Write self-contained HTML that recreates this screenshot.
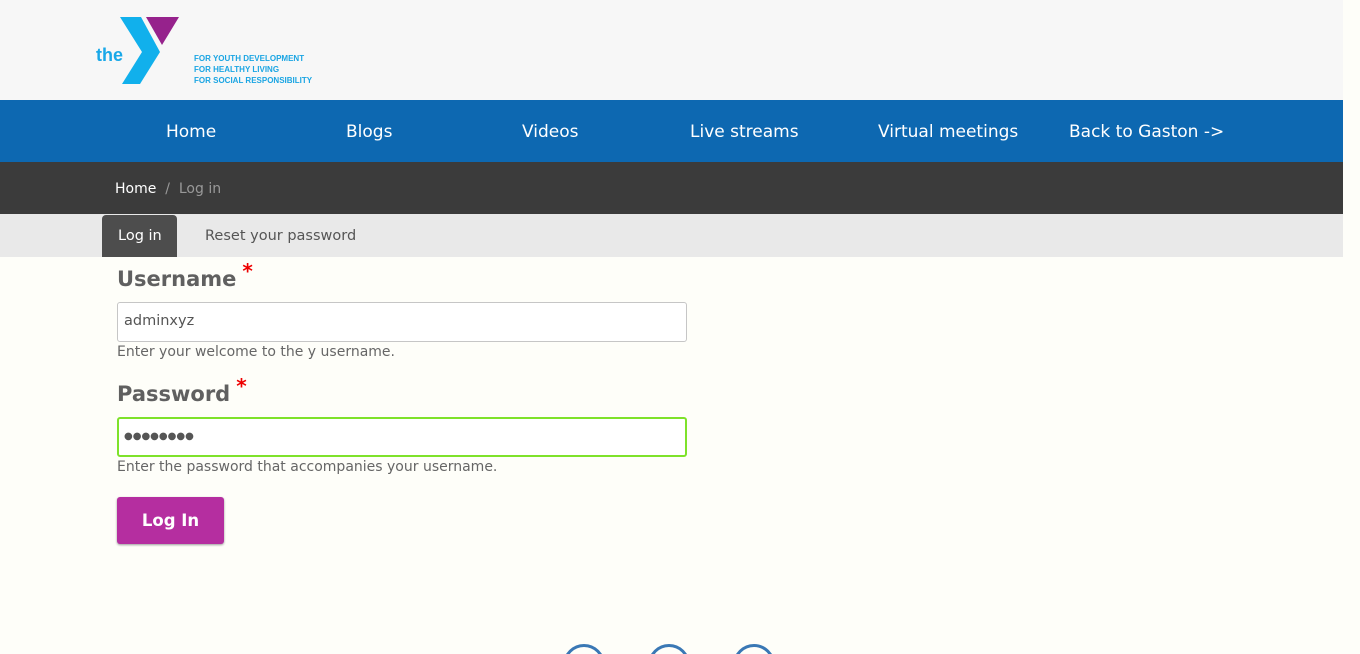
<!DOCTYPE html>
<html style="overflow:hidden;height:654px"><head><meta charset="utf-8"><style>
*{margin:0;padding:0;box-sizing:border-box}
html,body{width:1360px;height:654px;overflow:hidden}
body{background:#fefef9;font-family:"DejaVu Sans","Liberation Sans",sans-serif;position:relative}
.a{position:absolute}
#hdr{left:0;top:0;width:1343px;height:100px;background:#f7f7f7}
#nav{left:0;top:100px;width:1343px;height:62px;background:#0d68b1}
#nav span{position:absolute;top:22px;color:#fff;font-size:17px;white-space:nowrap}
#bc{left:0;top:162px;width:1343px;height:52px;background:#3b3b3b;font-size:14px;color:#999}
#tabs{left:0;top:214px;width:1343px;height:43px;background:#e9e9e9}
.lbl{font-weight:bold;font-size:21px;color:#606060}
.lbl i{color:#e00;font-style:normal;font-size:20px;position:relative;top:-8px;margin-left:6px}
.inp{width:570px;height:40px;background:#fff;border:1px solid #c6c6c6;border-radius:3px;font-size:14.5px;color:#555;padding:10px 6px}
.desc{font-size:14px;color:#666}
</style></head><body>
<div class="a" id="hdr">
<span class="a" style="left:96px;top:45px;color:#19a8e8;font-weight:bold;font-size:18px;font-family:'Liberation Sans',sans-serif">the</span>
<svg class="a" style="left:118px;top:14px" width="70" height="74"><polygon points="2,3 23,3 42,38 22,70 4,70 24,38" fill="#11b0ec"/><polygon points="28,3 61,3 44,31" fill="#96228c"/></svg>
<div class="a" style="left:194px;top:53px;color:#1aa5e3;font-size:8px;font-weight:bold;line-height:11px;font-family:'Liberation Sans',sans-serif">FOR YOUTH DEVELOPMENT<br>FOR HEALTHY LIVING<br>FOR SOCIAL RESPONSIBILITY</div>
</div>
<div class="a" id="nav">
<span style="left:166px">Home</span><span style="left:346px">Blogs</span><span style="left:522px">Videos</span><span style="left:690px">Live streams</span><span style="left:878px">Virtual meetings</span><span style="left:1069px">Back to Gaston -&gt;</span>
</div>
<div class="a" id="bc"><span class="a" style="left:115px;top:19px"><span style="color:#fff">Home</span> &nbsp;/&nbsp; Log in</span></div>
<div class="a" id="tabs">
<div class="a" style="left:102px;top:1px;width:75px;height:42px;background:#4d4d4d;border-radius:4px 4px 0 0;color:#fff;font-size:14.5px;padding:13px 0 0 16px">Log in</div>
<span class="a" style="left:205px;top:14px;font-size:14.5px;color:#555">Reset your password</span>
</div>
<div class="a lbl" style="left:117px;top:267px">Username<i>*</i></div>
<div class="a inp" style="left:117px;top:302px">adminxyz</div>
<div class="a desc" style="left:117px;top:344px">Enter your welcome to the y username.</div>
<div class="a lbl" style="left:117px;top:382px">Password<i>*</i></div>
<div class="a inp" style="left:117px;top:417px;border:2px solid #7ee22a;font-size:10px;letter-spacing:0px;padding:12px 5px;color:#555">●●●●●●●●</div>
<div class="a desc" style="left:117px;top:459px">Enter the password that accompanies your username.</div>
<div class="a" style="left:117px;top:497px;width:107px;height:47px;background:#b52ea0;border-radius:3px;color:#fff;font-weight:bold;font-size:16.5px;text-align:center;line-height:47px;font-family:'DejaVu Sans',sans-serif;box-shadow:0 1px 2px #999">Log In</div>
<div class="a" style="left:563px;top:644px;width:42px;height:42px;border:3px solid #3a78b5;border-radius:50%"></div>
<div class="a" style="left:648px;top:644px;width:42px;height:42px;border:3px solid #3a78b5;border-radius:50%"></div>
<div class="a" style="left:733px;top:644px;width:42px;height:42px;border:3px solid #3a78b5;border-radius:50%"></div>
</body></html>
